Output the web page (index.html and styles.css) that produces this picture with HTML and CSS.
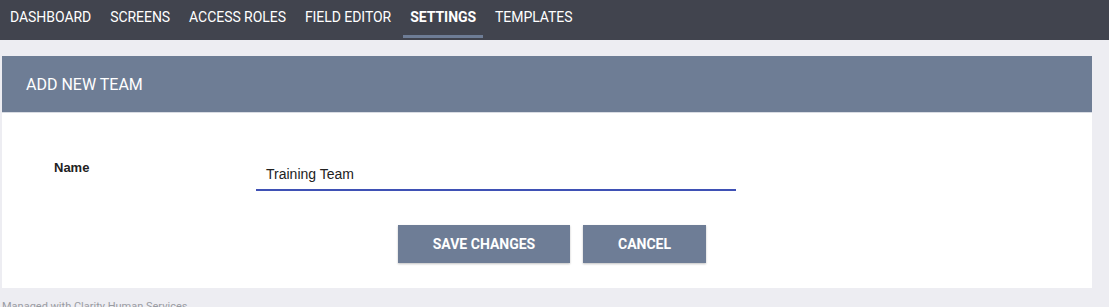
FILE: index.html
```html
<!DOCTYPE html>
<html>
<head>
<meta charset="utf-8">
<link rel="stylesheet" href="styles.css">
</head>
<body>
<nav class="topnav">
  <a class="nav-item">DASHBOARD</a>
  <a class="nav-item">SCREENS</a>
  <a class="nav-item">ACCESS ROLES</a>
  <a class="nav-item">FIELD EDITOR</a>
  <a class="nav-item active">SETTINGS</a>
  <a class="nav-item">TEMPLATES</a>
</nav>
<main class="page">
  <section class="card">
    <header class="card-header">ADD NEW TEAM</header>
    <div class="card-body">
      <div class="form-row">
        <label class="field-label">Name</label>
        <div class="field-input">Training Team</div>
      </div>
      <div class="actions">
        <button class="btn">SAVE CHANGES</button>
        <button class="btn btn-cancel">CANCEL</button>
      </div>
    </div>
  </section>
  <footer class="footer">Managed with Clarity Human Services</footer>
</main>
</body>
</html>
```
FILE: styles.css
```css
* { box-sizing: border-box; }
html, body { margin: 0; padding: 0; }
body {
  background: #ededf2;
  font-family: Roboto, "Liberation Sans", sans-serif;
  height: 307px;
  overflow: hidden;
}
.topnav {
  height: 40px;
  background: #41444e;
  display: flex;
  align-items: stretch;
  gap: 5px;
  padding-left: 3px;
}
.nav-item {
  color: #ffffff;
  font-size: 14px;
  padding: 0 7px 6px;
  display: flex;
  align-items: center;
  letter-spacing: -0.05px;
  position: relative;
}
.nav-item.active { font-weight: 700; }
.nav-item.active::after {
  content: "";
  position: absolute;
  left: 0; right: 0;
  bottom: 2px;
  height: 3px;
  background: #6e7d96;
}
.page {
  padding: 16px 17px 0 2px;
}
.card {
  background: #ffffff;
}
.card-header {
  height: 57px;
  background: #6e7d95;
  color: #ffffff;
  font-family: Roboto, sans-serif;
  font-size: 16px;
  padding: 0 24px;
  display: flex;
  align-items: center;
  border-bottom: 1px solid #d9dce3;
}
.card-body {
  height: 175px;
  padding-top: 38px;
}
.form-row {
  display: flex;
  align-items: flex-start;
}
.field-label {
  font-family: "Liberation Sans", Arial, sans-serif;
  font-weight: 700;
  font-size: 13px;
  color: #222;
  width: 254px;
  padding-left: 52px;
  padding-top: 9px;
}
.field-input {
  width: 480px;
  height: 40px;
  font-family: "Liberation Sans", Arial, sans-serif;
  font-size: 14px;
  color: #222;
  padding: 15px 10px 0;
  border-bottom: 2px solid #3f51b5;
}
.actions {
  display: flex;
  gap: 13px;
  padding-left: 396px;
  margin-top: 34px;
}
.btn {
  border: none;
  background: #6e7d96;
  color: #ffffff;
  font-family: Roboto, sans-serif;
  font-weight: 700;
  font-size: 14px;
  height: 38px;
  width: 172px;
  padding: 0;
  box-shadow: 0 1px 2px rgba(0,0,0,0.25);
}
.btn-cancel { width: 123px; }
.footer {
  font-family: Roboto, sans-serif;
  font-size: 11px;
  color: #9a9ca3;
  padding-top: 12px;
  padding-left: 0;
}
```
